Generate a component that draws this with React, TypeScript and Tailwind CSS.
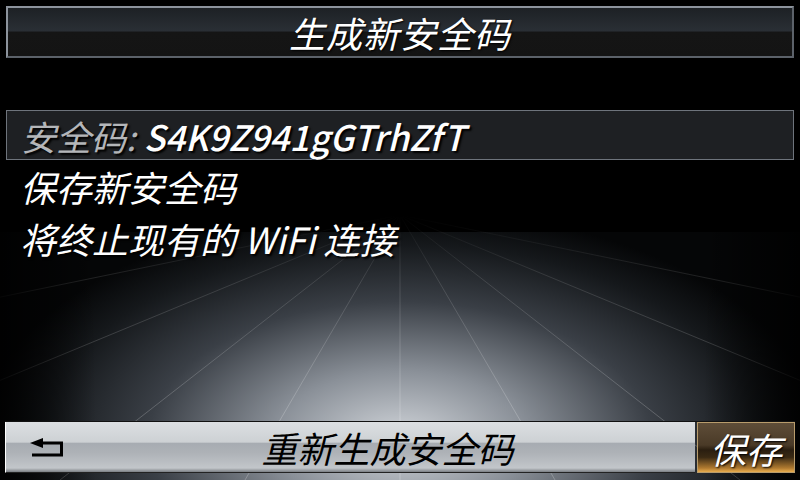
import React from 'react';

const rays = [
  { x: 400, y: 480 },
  { x: 245, y: 480 },
  { x: 555, y: 480 },
  { x: 60, y: 480 },
  { x: 740, y: 480 },
  { x: -120, y: 430 },
  { x: 920, y: 430 },
  { x: -160, y: 330 },
  { x: 960, y: 330 },
];

const Backdrop: React.FC = () => (
  <svg className="absolute inset-0" width="800" height="480" viewBox="0 0 800 480">
    <defs>
      <radialGradient id="glow" cx="400" cy="440" r="420" gradientUnits="userSpaceOnUse" gradientTransform="translate(400 440) scale(1 0.55) translate(-400 -440)">
        <stop offset="0" stopColor="#d2d6db" />
        <stop offset="0.3" stopColor="#8a9098" />
        <stop offset="0.6" stopColor="#3a3f46" />
        <stop offset="0.85" stopColor="#15181b" />
        <stop offset="1" stopColor="#050607" />
      </radialGradient>
      <linearGradient id="rayFade" x1="0" y1="215" x2="0" y2="440" gradientUnits="userSpaceOnUse">
        <stop offset="0" stopColor="#ffffff" stopOpacity="0" />
        <stop offset="0.3" stopColor="#ffffff" stopOpacity="0.12" />
        <stop offset="1" stopColor="#ffffff" stopOpacity="0.22" />
      </linearGradient>
      <linearGradient id="sideFade" x1="0" y1="0" x2="800" y2="0" gradientUnits="userSpaceOnUse">
        <stop offset="0" stopColor="#000" stopOpacity="0.85" />
        <stop offset="0.12" stopColor="#000" stopOpacity="0" />
        <stop offset="0.88" stopColor="#000" stopOpacity="0" />
        <stop offset="1" stopColor="#000" stopOpacity="0.85" />
      </linearGradient>
    </defs>
    <rect x="0" y="0" width="800" height="480" fill="#000" />
    <rect x="0" y="232" width="800" height="248" fill="url(#glow)" />
    {rays.map((r, i) => (
      <line key={i} x1="400" y1="215" x2={r.x} y2={r.y} stroke="url(#rayFade)" strokeWidth="1" />
    ))}
    <rect x="0" y="232" width="800" height="248" fill="url(#sideFade)" />
  </svg>
);

const BackIcon: React.FC = () => (
  <svg width="36" height="22" viewBox="0 0 36 22">
    <polygon points="0,6 13,1 13,11" fill="#000" />
    <path d="M12 6 H31.5 V18 H2" fill="none" stroke="#000" strokeWidth="3" />
  </svg>
);

const textFont = { fontFamily: '"Noto Sans CJK SC", "Noto Sans", sans-serif' };

export default function App() {
  return (
    <div className="relative w-[800px] h-[480px] overflow-hidden bg-black" style={textFont}>
      <Backdrop />
      <div className="relative flex flex-col h-full">
        {/* title bar */}
        <div className="mx-[6px] mt-[6px] h-[52px] border-2 border-t-[#8c939c] border-l-[#8c939c] border-r-[#5c626a] border-b-[#5c626a] flex items-center justify-center bg-[linear-gradient(to_bottom,#1d2125_0%,#2a2f35_48%,#151515_50%,#141414_100%)]">
          <span className="text-[36px] italic text-white leading-none tracking-[1px] [text-shadow:1px_1px_2px_#000]">生成新安全码</span>
        </div>

        <div className="h-[52px]" />

        {/* selected row */}
        <div className="mx-[6px] h-[50px] border border-[#6e747c] bg-[#1e2023] flex items-center pl-[14px]">
          <span className="text-[35px] italic leading-none text-[#b4b6b9] [text-shadow:2px_2px_2px_#000]">安全码:</span>
          <span className="text-[35px] italic font-medium leading-none text-white ml-[8px] [text-shadow:2px_2px_2px_#000]">S4K9Z941gGTrhZfT</span>
        </div>
        <div className="h-[52px] flex items-center pl-[20px]">
          <span className="text-[36px] italic leading-none text-white [text-shadow:2px_2px_2px_#000]">保存新安全码</span>
        </div>
        <div className="h-[52px] flex items-center pl-[20px]">
          <span className="text-[36px] italic leading-none text-white [text-shadow:2px_2px_2px_#000]">将终止现有的 WiFi 连接</span>
        </div>

        <div className="flex-1" />

        {/* bottom bar */}
        <div className="flex h-[52px] mx-[5px] mb-[7px] gap-[2px] border-t border-[#111]">
          <div className="flex-1 flex items-center relative border-l border-l-white border-b border-b-[#222] bg-[linear-gradient(to_bottom,#dcdfe2_0%,#cdd1d4_40%,#a7acb2_43%,#aeb2b7_62%,#c2c6ca_92%,#7a7e83_100%)]">
            <div className="pl-[24px] pt-[2px]">
              <BackIcon />
            </div>
            <span className="flex-1 text-center pl-[14px] text-[36px] italic leading-none text-black">重新生成安全码</span>
          </div>
          <div className="w-[98px] flex items-center justify-center border border-[#b89c6c] bg-[linear-gradient(to_bottom,#5e4d38_0%,#4a3a27_45%,#2a1e10_55%,#3a2a14_70%,#b07a30_92%,#e9ad4e_100%)]">
            <span className="text-[36px] italic leading-none text-white [text-shadow:1px_1px_2px_#000]">保存</span>
          </div>
        </div>
      </div>
    </div>
  );
}
